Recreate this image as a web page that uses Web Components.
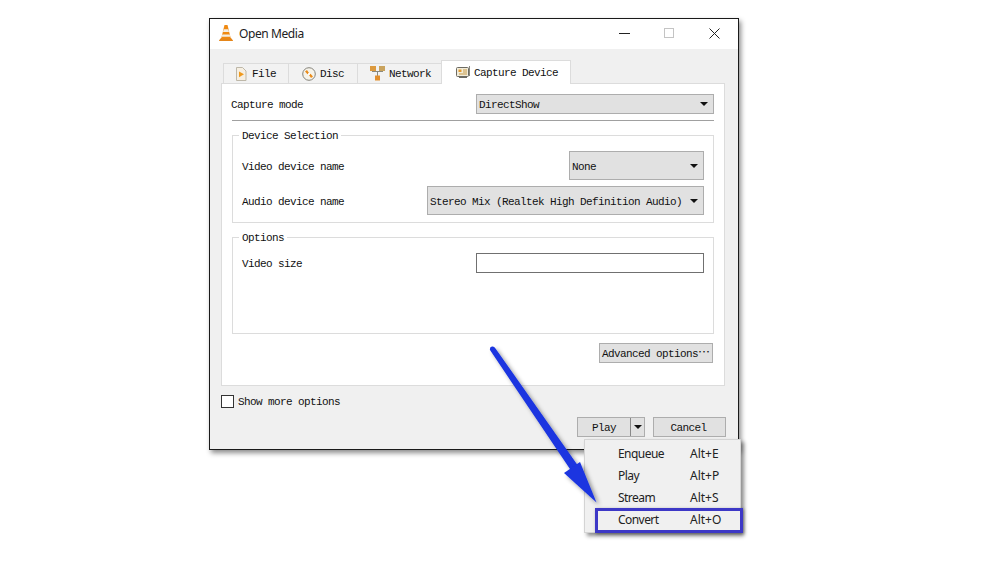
<!DOCTYPE html>
<html><head><meta charset="utf-8">
<style>
html,body{margin:0;padding:0;background:#fff;}
body{width:1000px;height:580px;overflow:hidden;font-family:"Liberation Mono",monospace;font-size:11px;letter-spacing:-.6px;color:#111;padding:18px 0 0 209px;box-sizing:border-box;position:relative;}
.cjk{font:12px "Noto Sans CJK SC",sans-serif;letter-spacing:0;line-height:10px}
</style></head><body>
<vlc-window heading="Open Media">
  <media-tabs></media-tabs>
  <tab-pane>
    <form-row label="Capture mode" style="margin-left:-1px"><drop-select w="238" h="20">DirectShow</drop-select></form-row>
    <h-rule></h-rule>
    <group-box heading="Device Selection" h="88" style="--tp:3px">
      <form-row label="Video device name"><drop-select w="135" h="29">None</drop-select></form-row>
      <form-row label="Audio device name" style="margin-top:6px"><drop-select w="277" h="29">Stereo Mix (Realtek High Definition Audio)</drop-select></form-row>
    </group-box>
    <group-box heading="Options" h="97" style="margin-top:14px">
      <form-row label="Video size"><text-box></text-box></form-row>
    </group-box>
    <action-row><push-button w="114" h="20">Advanced options<span class="cjk" lang="zh-CN">⋯</span></push-button></action-row>
  </tab-pane>
  <check-row>Show more options</check-row>
  <dialog-buttons></dialog-buttons>
</vlc-window>
<popup-menu></popup-menu>
<blue-arrow></blue-arrow>
<script>
const def=(n,html)=>customElements.define(n,class extends HTMLElement{
  connectedCallback(){if(this.shadowRoot)return;const r=this.attachShadow({mode:'open'});r.innerHTML=typeof html==='function'?html(this):html;}
});
const cone=`<svg width="14" height="16" viewBox="0 0 14 16"><path d="M0 15.500l2-2.500h10l2 2.500q0 .5-.5.5H.5q-.5 0-.5-.5z" fill="#e5861a"/><path d="M5.500 0h3l3.300 13.500H2.200z" fill="#f08a12"/><path d="M4.700 4.300h4.600l.7 2.800H4zM3.300 9.600h7.400l.6 2.200H2.700z" fill="#f3efe6"/></svg>`;
def('vlc-window',h=>`<style>
:host{display:flex;flex-direction:column;width:530px;height:432px;box-sizing:border-box;border:1px solid #1a1a1a;background:#f0f0f0;box-shadow:2px 3px 5px rgba(0,0,0,.45);position:relative}
.bar{height:30px;box-sizing:border-box;padding:0 0 2px 9px;background:#fff;display:flex;align-items:center;font:12px "Noto Sans","Liberation Sans",sans-serif;letter-spacing:-.42px;color:#222;flex:none}
.t{margin-left:6px}
.ctl{margin-left:auto;display:flex;align-items:center;margin-right:18px}
svg{display:block}
.body{padding:11px 13px 0 11px;display:flex;flex-direction:column;flex:1}
</style><div class="bar">${cone}<span class="t">${h.getAttribute('heading')}</span>
<div class="ctl"><svg width="11" height="11" viewBox="0 0 11 11"><path d="M0 5.500h11" stroke="#222"/></svg>
<svg style="margin:0 35px 0 34px" width="10" height="10" viewBox="0 0 10 10"><rect x=".5" y=".5" width="9" height="9" fill="none" stroke="#c4c4c4"/></svg>
<svg width="11" height="11" viewBox="0 0 11 11"><path d="M.5.500l10 10M10.500.500l-10 10" stroke="#222"/></svg></div></div>
<div class="body"><slot></slot></div>`);
const icons={
file:`<svg width="12" height="14" viewBox="0 0 12 14"><path d="M1.500.5h6l3.500 3.500v9.500H1.500z" fill="#f6efe2" stroke="#bdb7a8"/><path d="M4 4.500l5 2.800-5 2.900z" fill="#ef9a1e"/></svg>`,
disc:`<svg width="14" height="14" viewBox="0 0 14 14"><circle cx="7" cy="7" r="6.300" fill="#f6f3ea" stroke="#85827a"/><path d="M3 4.500L5 3l2 3-1.500 1.200zM11 9.500L9 11 7 8l1.500-1.200z" fill="#e98b1a"/><circle cx="7" cy="7" r="1" fill="#fff"/></svg>`,
net:`<svg width="15" height="15" viewBox="0 0 15 15"><path d="M7.500 5v5M2 5.500h11" stroke="#8a8a80"/><rect x="0" y="0" width="6" height="5" fill="#dc9a3e"/><rect x="9" y="0" width="6" height="5" fill="#c9a35e"/><rect x="5" y="9.500" width="5" height="5" fill="#e28f2e"/></svg>`,
cap:`<svg width="15" height="13" viewBox="0 0 15 13"><rect x=".5" y="1.500" width="12" height="9" rx="1" fill="#f1ecda" stroke="#6c6a62"/><rect x="2.500" y="3.500" width="3" height="2.500" fill="#e39a2e"/><path d="M7 4h4M7 6h4M3 8h8" stroke="#c79a48"/><path d="M13.500 0v10" stroke="#8a887e"/><path d="M3 11.500h8" stroke="#6c6a62"/></svg>`};
def('media-tabs',`<style>
:host{display:flex;align-items:flex-end;height:24px;margin-left:2px;position:relative;z-index:1;margin-bottom:-1px}
.t{display:flex;align-items:center;height:21px;box-sizing:border-box;background:#f2f2f2;border:1px solid #dcdcdc;border-right:0;flex:none}
.a{background:#fff;height:24px;border:1px solid #dcdcdc;border-bottom:0}
</style>
<div class="t" style="width:65px;padding-left:11px;gap:5px">${icons.file}<span>File</span></div>
<div class="t" style="width:69px;padding-left:13px;gap:4px">${icons.disc}<span>Disc</span></div>
<div class="t" style="width:84px;padding-left:12px;gap:4px">${icons.net}<span>Network</span></div>
<div class="t a" style="width:130px;padding-left:14px;gap:3px">${icons.cap}<span>Capture Device</span></div>`);
def('tab-pane',`<style>:host{display:block;box-sizing:border-box;width:504px;height:303px;background:#fff;border:1px solid #dcdcdc;padding:10px 10px 0 10px}</style><slot></slot>`);
def('form-row',h=>`<style>:host{display:flex;align-items:center;justify-content:space-between}span{padding-top:var(--tp,1px)}</style><span>${h.getAttribute('label')}</span><slot></slot>`);
def('drop-select',h=>`<style>:host{display:flex;align-items:center;box-sizing:border-box;width:${h.getAttribute('w')}px;height:${h.getAttribute('h')}px;background:#e1e1e1;border:1px solid #adadad;padding:0 5px 0 2px;justify-content:space-between;white-space:nowrap}
span{padding-top:var(--tp,1px)}i{width:0;height:0;border:4px solid transparent;border-top:4px solid #111;border-bottom:0;flex:none}</style><span><slot></slot></span><i></i>`);
def('h-rule',`<style>:host{display:block;height:1px;background:#a0a0a0;margin:6px 0 14px}</style>`);
def('group-box',h=>`<style>:host{display:block;box-sizing:border-box;height:${h.getAttribute('h')}px;border:1px solid #dcdcdc;position:relative;padding:15px 9px 0 9px}
b{position:absolute;left:6px;top:-6px;font-weight:normal;background:#fff;padding:0 3px;line-height:13px}</style><b>${h.getAttribute('heading')}</b><slot></slot>`);
def('text-box',`<style>:host{display:block;box-sizing:border-box;width:228px;height:20px;border:1px solid #707070;background:#fff}</style>`);
def('action-row',`<style>:host{display:flex;justify-content:flex-end;margin:9px 1px 0 0}</style><slot></slot>`);
def('push-button',h=>`<style>:host{display:flex;align-items:center;box-sizing:border-box;width:${h.getAttribute('w')}px;height:${h.getAttribute('h')}px;padding:1px 0 0 2px;background:#e1e1e1;border:1px solid #adadad;white-space:nowrap}</style><span><slot></slot></span>`);
def('check-row',`<style>:host{display:flex;align-items:center;gap:4px;margin-top:8px;height:14px}i{width:13px;height:13px;box-sizing:border-box;border:1px solid #333;background:#fff}span{padding-top:1px}</style><i></i><span><slot></slot></span>`);
def('dialog-buttons',`<style>:host{display:flex;justify-content:flex-end;margin-top:9px;margin-right:-1px;gap:8px}
.b{display:flex;height:20px;box-sizing:border-box;background:#e1e1e1;border:1px solid #adadad;align-items:center}
.p{width:68px}.p span{flex:1;text-align:center;padding-top:1px}.p em{width:13px;height:100%;border-left:1px solid #888;display:flex;align-items:center;justify-content:center}
.p i{width:0;height:0;border:4px solid transparent;border-top:4px solid #111;border-bottom:0}
.c{width:73px;justify-content:center}.c span{padding:1px 2px 0 0}</style>
<div class="b p"><span>Play</span><em><i></i></em></div><div class="b c"><span>Cancel</span></div>`);
def('popup-menu',`<style>:host{position:absolute;left:584px;top:439px;width:157px;height:94px;box-sizing:border-box;background:#f0f0f0;border:1px solid #d4d4d4;box-shadow:3px 3px 4px rgba(0,0,0,.45);padding-top:2px;font:12px "Noto Sans","Liberation Sans",sans-serif;letter-spacing:0;color:#222;display:block}
.r{display:grid;grid-template-columns:72px auto;padding-left:33px;height:22px;align-items:center}
.r span:first-child{letter-spacing:-.55px}
.hl{position:absolute;left:10px;top:68px;width:148px;height:25px;box-sizing:border-box;border:3px solid #3d38c6;box-shadow:1px 1px 3px rgba(0,0,0,.4)}</style>
<div class="r"><span>Enqueue</span><span>Alt+E</span></div><div class="r"><span>Play</span><span>Alt+P</span></div><div class="r"><span>Stream</span><span>Alt+S</span></div><div class="r"><span>Convert</span><span>Alt+O</span></div><div class="hl"></div>`);
def('blue-arrow',`<style>:host{position:absolute;left:0;top:0;display:block;pointer-events:none}svg{display:block;overflow:visible}</style>
<svg width="1000" height="580" viewBox="0 0 1000 580"><defs><filter id="s" x="-20%" y="-20%" width="150%" height="150%"><feDropShadow dx="3" dy="3" stdDeviation="2" flood-color="#000" flood-opacity=".4"/></filter></defs>
<g filter="url(#s)" fill="#1a35e0"><path d="M490 350 Q489.500 347 492 346.500 Q494 346 495.500 348.500 L581 470 L574 475 Z"/><path d="M564 473 L580 462 L596.500 502.500 Z"/></g></svg>`);
</script>
</body></html>
